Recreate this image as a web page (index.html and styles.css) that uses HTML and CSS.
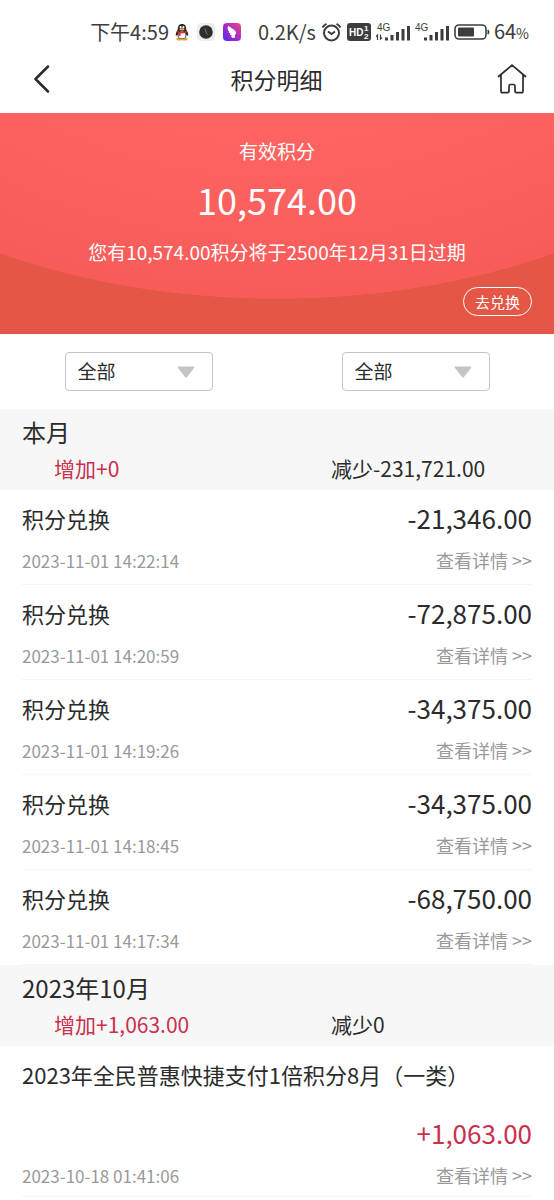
FILE: index.html
```html
<!DOCTYPE html>
<html lang="zh-CN">
<head>
<meta charset="utf-8">
<meta name="viewport" content="width=device-width, initial-scale=1">
<title>积分明细</title>
<link rel="stylesheet" href="styles.css">
</head>
<body>
<div class="page">
  <div class="status">
    <span class="status-text clock">下午4:59</span>
    <div class="apps">
      <svg width="14" height="18" viewBox="0 0 14 18" aria-hidden="true">
        <ellipse cx="4.5" cy="16" rx="3" ry="1.5" fill="#e8a23c"/><ellipse cx="9.5" cy="16" rx="3" ry="1.5" fill="#e8a23c"/>
        <path d="M7 1C4 1 2.700 3.200 2.800 6.500C1.500 8.500.5 10.500.8 12.500C1.500 13 2 12 2.300 11.500C2.600 14.500 4.500 16 7 16S11.400 14.500 11.700 11.500C12 12 12.500 13 13.200 12.500C13.500 10.500 12.500 8.500 11.200 6.500C11.300 3.200 10 1 7 1Z" fill="#2b2422"/>
        <ellipse cx="7" cy="12" rx="3.600" ry="3.600" fill="#fff"/>
        <ellipse cx="5.600" cy="4.300" rx="1" ry="1.400" fill="#fff"/><ellipse cx="8.400" cy="4.300" rx="1" ry="1.400" fill="#fff"/>
        <ellipse cx="7" cy="6.600" rx="2.600" ry="1" fill="#eeb23c"/>
        <path d="M2.500 7.500Q7 10.500 11.500 7.500L11.800 9.300Q9 10.800 5.600 10.500V13H3.600V10Q2.500 9.600 2.200 9.200Z" fill="#d8343a"/>
      </svg>
      <svg width="18" height="18" viewBox="0 0 18 18" aria-hidden="true">
        <rect width="18" height="18" rx="4" fill="#eee"/><circle cx="9" cy="9" r="6.800" fill="#2d2f30"/><path d="M8 5.500L9 9L10.500 11.500" stroke="#888" stroke-width=".8" fill="none"/>
      </svg>
      <svg width="18" height="18" viewBox="0 0 18 18" aria-hidden="true">
        <defs><linearGradient id="wing" x1="1" y1="0" x2="0" y2="1"><stop offset="0" stop-color="#f04880"/><stop offset=".5" stop-color="#a52cc8"/><stop offset="1" stop-color="#5a28ee"/></linearGradient></defs>
        <rect width="18" height="18" rx="4" fill="url(#wing)"/>
        <path d="M5 2.800L10.800 6.500Q13.500 8.500 13 10.500L11.800 12.500L12.300 14.500L9.500 15L8 13.500L8.800 12.500L6.800 11.500L7.400 10.600L5.600 9.300L6.200 8.400L5 7.300Q4.300 5 5 2.800Z" fill="#fff"/>
      </svg>
    </div>
    <span class="status-text">0.2K/s</span>
    <div class="signals">
      <svg width="21" height="20" viewBox="0 0 21 20" fill="none" stroke="#3d3d3d" stroke-width="2" aria-hidden="true">
        <circle cx="10.500" cy="11" r="7.500"/><path d="M7 9.500L10.500 12L14 9.500M1.500 5.500Q3 3 5.500 1.800M19.500 5.500Q18 3 15.500 1.800"/>
      </svg>
      <svg class="hd" width="24" height="18" viewBox="0 0 24 18" aria-hidden="true">
        <rect width="24" height="18" rx="3" fill="#3d3d3d"/><text x="2" y="13" font-size="10">HD</text><text x="17" y="8" font-size="8">1</text><text x="17" y="16" font-size="8">2</text>
      </svg>
      <svg class="cell" width="34" height="20" viewBox="0 0 34 20" aria-hidden="true">
        <text x="1" y="9" font-size="10">4G</text>
        <path d="M0 14.500L1.500 13V18M4.500 12.500V17L6 15.500" stroke="#3d3d3d" stroke-width="1.200" fill="none"/>
        <path d="M9 15.500h3v3H9zM14.500 13h3v5.500h-3zM20 10h3v8.500h-3zM25.500 7h3v11.500h-3zM31 4h3v14.500h-3z"/>
      </svg>
      <svg class="cell" width="34" height="20" viewBox="0 0 34 20" aria-hidden="true">
        <text x="0" y="9" font-size="10">4G</text>
        <path d="M9 15.500h3v3H9zM14.500 13h3v5.500h-3zM20 10h3v8.500h-3zM25.500 7h3v11.500h-3zM31 4h3v14.500h-3z"/>
      </svg>
      <svg width="36" height="16" viewBox="0 0 36 16" aria-hidden="true">
        <rect x="1" y="1" width="31" height="14" rx="4" fill="none" stroke="#3d3d3d" stroke-width="1.600"/><rect x="4" y="3.500" width="16" height="9" rx="1" fill="#3d3d3d"/><path d="M33.500 5.500Q35.500 5.500 35.500 8T33.500 10.500Z" fill="#3d3d3d"/>
      </svg>
    </div>
    <span class="status-text">64<small>%</small></span>
  </div>

  <header class="nav">
    <button class="icon-button" type="button" aria-label="返回">
      <svg width="16" height="28" viewBox="0 0 16 28"><path d="M14 1.500L1.500 14L14 26.500" fill="none" stroke="#2b2b2b" stroke-width="2.500" stroke-linecap="round" stroke-linejoin="round"/></svg>
    </button>
    <h1>积分明细</h1>
    <button class="icon-button" type="button" aria-label="首页">
      <svg width="30" height="30" viewBox="0 0 30 30"><path d="M1.500 12.500L15 1.200L28.500 12.500M4 10.500V27Q4 28.700 5.700 28.700H10.500Q12 28.700 12 27V22.500Q12 20.500 13.500 20.500H16.500Q18 20.500 18 22.500V27Q18 28.700 19.500 28.700H24.300Q26 28.700 26 27V10.500" fill="none" stroke="#2b2b2b" stroke-width="1.700" stroke-linecap="round" stroke-linejoin="round"/></svg>
    </button>
  </header>

  <section class="banner">
    <p class="banner-label">有效积分</p>
    <p class="banner-total">10,574.00</p>
    <p class="banner-label">您有10,574.00积分将于2500年12月31日过期</p>
    <button class="redeem" type="button">去兑换</button>
  </section>

  <form class="filters">
    <select aria-label="积分类型"><option>全部</option></select>
    <select aria-label="时间"><option>全部</option></select>
  </form>

  <section>
    <div class="month">
      <h2>本月</h2>
      <div class="totals"><span class="gain">增加+0</span><span>减少-231,721.00</span></div>
    </div>
    <ul class="records">
      <li><div class="line"><span>积分兑换</span><span class="amount">-21,346.00</span></div><div class="line meta"><time>2023-11-01 14:22:14</time><a href="#">查看详情 &gt;&gt;</a></div></li>
      <li><div class="line"><span>积分兑换</span><span class="amount">-72,875.00</span></div><div class="line meta"><time>2023-11-01 14:20:59</time><a href="#">查看详情 &gt;&gt;</a></div></li>
      <li><div class="line"><span>积分兑换</span><span class="amount">-34,375.00</span></div><div class="line meta"><time>2023-11-01 14:19:26</time><a href="#">查看详情 &gt;&gt;</a></div></li>
      <li><div class="line"><span>积分兑换</span><span class="amount">-34,375.00</span></div><div class="line meta"><time>2023-11-01 14:18:45</time><a href="#">查看详情 &gt;&gt;</a></div></li>
      <li><div class="line"><span>积分兑换</span><span class="amount">-68,750.00</span></div><div class="line meta"><time>2023-11-01 14:17:34</time><a href="#">查看详情 &gt;&gt;</a></div></li>
    </ul>
  </section>

  <section>
    <div class="month">
      <h2>2023年10月</h2>
      <div class="totals"><span class="gain">增加+1,063.00</span><span>减少0</span></div>
    </div>
    <ul class="records">
      <li class="long"><div class="line wrap"><span>2023年全民普惠快捷支付1倍积分8月（一类）</span><span class="amount gain">+1,063.00</span></div><div class="line meta"><time>2023-10-18 01:41:06</time><a href="#">查看详情 &gt;&gt;</a></div></li>
      <li class="next"><span class="amount gain">+1,017.00</span></li>
    </ul>
  </section>
</div>
</body>
</html>
```
FILE: styles.css
```css
* { box-sizing: border-box; }

body {
  margin: 0;
  background: #fff;
  color: #2b2b2b;
  font-family: "Noto Sans CJK SC", sans-serif;
}

h1, h2, p, ul { margin: 0; padding: 0; font-weight: 400; }

button, select { font: inherit; color: inherit; }

.page { height: 100vh; overflow: hidden; }

.status {
  display: flex;
  align-items: center;
  justify-content: flex-end;
  height: 48px;
  padding: 16px 25px 0 0;
  color: #3d3d3d;
}

.status-text { font-size: 20px; line-height: 32px; }
.status-text small { font-size: 14px; }
.apps { display: flex; align-items: center; gap: 8px; margin: 0 17px 0 6px; }
.signals { display: flex; align-items: center; gap: 5px; margin: 0 4px 0 5px; }
.hd text { fill: #fff; font-family: "Liberation Sans", sans-serif; font-weight: 700; }
.cell { fill: #3d3d3d; font-family: "Liberation Sans", sans-serif; }

.nav {
  display: flex;
  align-items: center;
  justify-content: space-between;
  height: 65px;
  padding: 0 27px 3px 34px;
}

.nav h1 { padding-left: 6px; font-size: 23px; line-height: 32px; }
.icon-button { display: flex; padding: 0; border: 0; background: none; }

.banner {
  display: flex;
  flex-direction: column;
  align-items: center;
  padding: 24px 22px 18px;
  color: #fff;
  background:
    radial-gradient(ellipse 540px 320px at 50% -134px, #fd6461 50%, #f75c59 99.800%, transparent 100%),
    #e45646;
}

.banner-label { font-size: 19px; line-height: 28px; }
.banner-total { margin: 9px 0 13px; font-size: 36px; line-height: 51px; }

.redeem {
  align-self: flex-end;
  margin-top: 21px;
  padding: 0 11px;
  border: 1px solid #fff;
  border-radius: 15px;
  background: none;
  font-size: 15px;
  line-height: 27px;
}

.filters {
  display: grid;
  grid-template-columns: 1fr 1fr;
  justify-items: center;
  padding: 18px 0;
}

.filters select {
  width: 148px;
  height: 39px;
  padding: 0 12px 2px;
  border: 1px solid #c4c4c4;
  border-radius: 4px;
  appearance: none;
  font-size: 19px;
  background: #fff url("data:image/svg+xml,%3Csvg xmlns='http://www.w3.org/2000/svg' width='18' height='12'%3E%3Cpath d='M1 .5H17Q18 1 17 2L10 11Q9 12 8 11L1 2Q0 1 1 .5Z' fill='%23c4c4c4'/%3E%3C/svg%3E") no-repeat right 17px center;
}

.month { padding: 6px 0 6px; background: #f7f7f7; }
.month h2 { padding: 0 22px 4px; font-size: 24px; line-height: 33px; }

.totals {
  display: grid;
  grid-template-columns: 1fr 1fr;
  font-size: 21px;
  line-height: 32px;
}

.totals span { padding-left: 54px; }

.gain { color: #c9304d; }

.records { padding: 0 22px; list-style: none; }
.records li { padding: 7px 0 5px; border-bottom: 1px solid #f5f5f5; }
.records .long { padding-bottom: 2px; }
.records .next { padding: 2px 0 0; line-height: 20px; text-align: right; }

.line {
  display: flex;
  align-items: center;
  justify-content: space-between;
  font-size: 22px;
  line-height: 42px;
}

.amount { font-size: 26px; }
.meta { margin-top: 3px; color: #999; font-size: 17px; line-height: 37px; }
.meta a { color: inherit; font-size: 18px; text-decoration: none; }
.wrap { flex-direction: column; align-items: flex-start; gap: 17px; }
.wrap .amount { align-self: flex-end; }
```
